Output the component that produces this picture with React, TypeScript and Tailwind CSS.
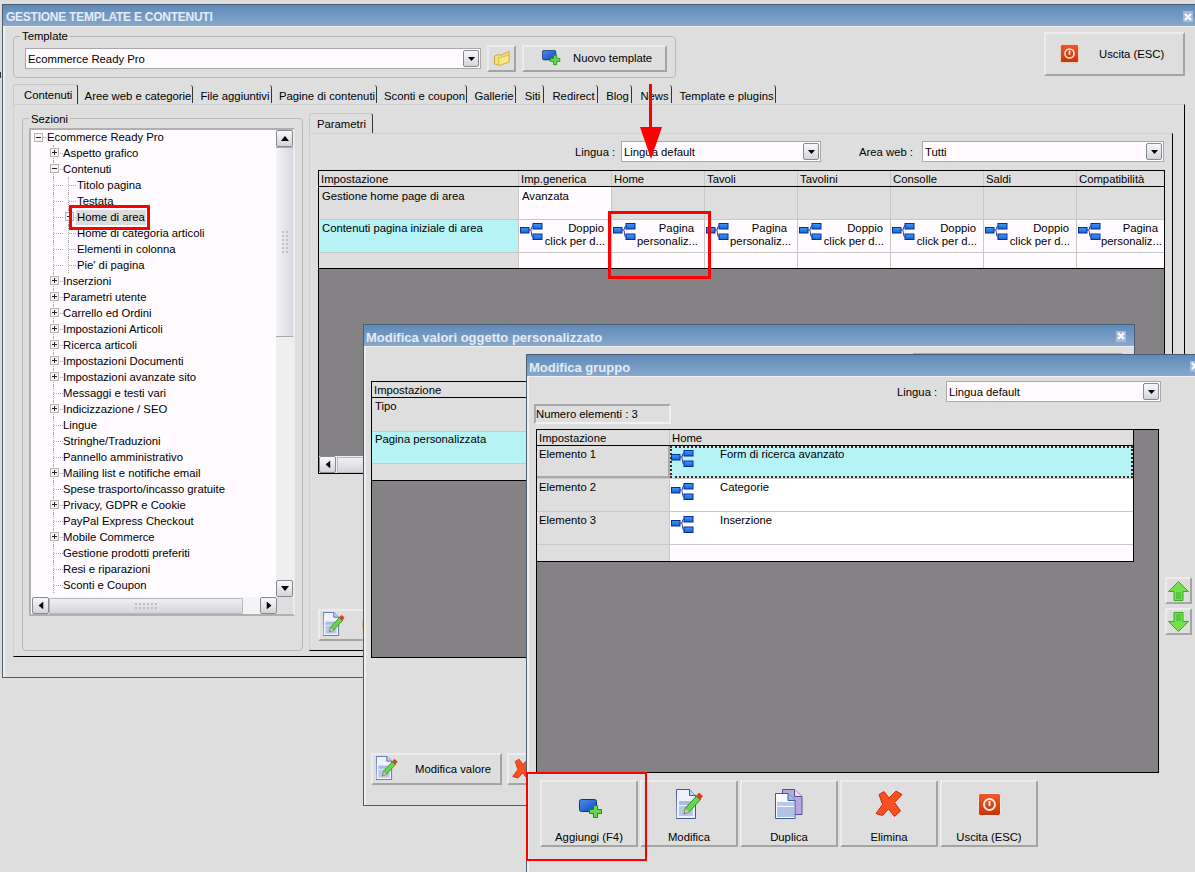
import React from 'react';

const TREE: { label: string; level: number; exp?: '+' | '-' }[] = [
  { label: 'Ecommerce Ready Pro', level: 0, exp: '-' },
  { label: 'Aspetto grafico', level: 1, exp: '+' },
  { label: 'Contenuti', level: 1, exp: '-' },
  { label: 'Titolo pagina', level: 2 },
  { label: 'Testata', level: 2 },
  { label: 'Home di area', level: 2, exp: '+' },
  { label: 'Home di categoria articoli', level: 2 },
  { label: 'Elementi in colonna', level: 2 },
  { label: "Pie' di pagina", level: 2 },
  { label: 'Inserzioni', level: 1, exp: '+' },
  { label: 'Parametri utente', level: 1, exp: '+' },
  { label: 'Carrello ed Ordini', level: 1, exp: '+' },
  { label: 'Impostazioni Articoli', level: 1, exp: '+' },
  { label: 'Ricerca articoli', level: 1, exp: '+' },
  { label: 'Impostazioni Documenti', level: 1, exp: '+' },
  { label: 'Impostazioni avanzate sito', level: 1, exp: '+' },
  { label: 'Messaggi e testi vari', level: 1 },
  { label: 'Indicizzazione / SEO', level: 1, exp: '+' },
  { label: 'Lingue', level: 1 },
  { label: 'Stringhe/Traduzioni', level: 1 },
  { label: 'Pannello amministrativo', level: 1 },
  { label: 'Mailing list e notifiche email', level: 1, exp: '+' },
  { label: 'Spese trasporto/incasso gratuite', level: 1 },
  { label: 'Privacy, GDPR e Cookie', level: 1, exp: '+' },
  { label: 'PayPal Express Checkout', level: 1 },
  { label: 'Mobile Commerce', level: 1, exp: '+' },
  { label: 'Gestione prodotti preferiti', level: 1 },
  { label: 'Resi e riparazioni', level: 1 },
  { label: 'Sconti e Coupon', level: 1 },
];

const TABS = [
  { label: 'Aree web e categorie', w: 115 },
  { label: 'File aggiuntivi', w: 79 },
  { label: 'Pagine di contenuti', w: 105 },
  { label: 'Sconti e coupon', w: 90 },
  { label: 'Gallerie', w: 49 },
  { label: 'Siti', w: 28 },
  { label: 'Redirect', w: 54 },
  { label: 'Blog', w: 34 },
  { label: 'News', w: 40 },
  { label: 'Template e plugins', w: 104 },
];

const COLS = [
  { name: 'Imp.generica', a: 'Doppio', b: 'click per d...' },
  { name: 'Home', a: 'Pagina', b: 'personaliz...' },
  { name: 'Tavoli', a: 'Pagina', b: 'personaliz...' },
  { name: 'Tavolini', a: 'Doppio', b: 'click per d...' },
  { name: 'Consolle', a: 'Doppio', b: 'click per d...' },
  { name: 'Saldi', a: 'Doppio', b: 'click per d...' },
  { name: 'Compatibilità', a: 'Pagina', b: 'personaliz...' },
];

const raised = 'border-2 border-t-[#ececec] border-l-[#ececec] border-r-[#a4a4a4] border-b-[#a4a4a4] bg-[#dedede]';

const TreeIcon = () => (
  <svg width="23" height="18" viewBox="0 0 23 18" className="shrink-0">
    <defs>
      <linearGradient id="treeBlue" x1="0" y1="0" x2="0" y2="1">
        <stop offset="0" stopColor="#3f9cf0" />
        <stop offset="1" stopColor="#1464d4" />
      </linearGradient>
    </defs>
    <path d="M9 7h1.500M10.500 7C12 6.500 11 3 13 3M10.500 7C12 8 11 14 13 14" fill="none" stroke="#1c2f8c" strokeWidth="1" />
    <rect x="0.500" y="4.500" width="8.500" height="5.500" fill="url(#treeBlue)" stroke="#0b2a9c" />
    <rect x="13" y="0.500" width="9" height="5.500" fill="url(#treeBlue)" stroke="#0b2a9c" />
    <rect x="13" y="11" width="9" height="5.500" fill="url(#treeBlue)" stroke="#0b2a9c" />
  </svg>
);

const AddIcon = ({ w = 24 }: { w?: number }) => (
  <svg width={w} height={(w * 19) / 24} viewBox="0 0 24 19">
    <defs>
      <linearGradient id="addBlue" x1="0" y1="0" x2="1" y2="1">
        <stop offset="0" stopColor="#4d8de8" />
        <stop offset="1" stopColor="#0f48c0" />
      </linearGradient>
    </defs>
    <rect x="0.500" y="0.500" width="17" height="12" rx="2" fill="url(#addBlue)" stroke="#12327e" />
    <path d="M14.500 6.500h4v4h4v4h-4v4h-4v-4h-4v-4h4z" fill="#62d84a" stroke="#1f8a1c" />
  </svg>
);

const EditIcon = ({ size = 30 }: { size?: number }) => (
  <svg width={(size * 27) / 30} height={size} viewBox="0 0 27 30">
    <path d="M0.500 0.500h13l6 6v23h-19.500z" fill="#eef2fb" stroke="#3e5a9c" />
    <path d="M13.500 0.500v6h6" fill="#bcd0ee" stroke="#3e5a9c" />
    <rect x="3" y="12" width="14" height="4" fill="#a9bce4" />
    <rect x="3" y="17" width="14" height="10" fill="#b8c8e8" />
    <path d="M8 25l1.500-6 11-12 4 3.500-11 12z" fill="#66d84a" stroke="#2e8c2a" />
    <path d="M8 25l1.500-6 4.500 4z" fill="#d8c8a8" stroke="#6a6a5a" strokeWidth="0.500" />
    <path d="M20.500 7l2.500-3 3.500 3-2.500 3.500z" fill="#e8391c" stroke="#a82010" strokeWidth="0.500" />
  </svg>
);

const DuplicaIcon = () => (
  <svg width="28" height="30" viewBox="0 0 28 30">
    <path d="M7.500 0.500h12l7.500 7v18h-19.500z" fill="#b9a8dc" stroke="#5a4a9c" />
    <path d="M19.500 0.500v7h7.500" fill="#e4dcf4" stroke="#5a4a9c" />
    <path d="M0.500 4.500h12.500l7 7v18h-19.500z" fill="#fafcff" stroke="#3e5a9c" />
    <path d="M13 4.500v7h7" fill="#8cc4e8" stroke="#3e5a9c" />
    <rect x="2" y="13" width="17" height="4" fill="#b8c8e8" />
    <rect x="2" y="18" width="17" height="10" fill="#b0c2e6" />
  </svg>
);

const CrossIcon = ({ size = 28 }: { size?: number }) => (
  <svg width={size} height={size} viewBox="0 0 28 28">
    <path d="M4 4.500l5-3 5 6.500 7-7 6 3.500-7.500 8 6 8.500-6 5.500-6-7.500-6 6.500-6.500-2 6.500-9z" fill="#f8501e" stroke="#c8280c" />
  </svg>
);

const PowerIcon = ({ size = 23 }: { size?: number }) => (
  <svg width={size} height={size} viewBox="0 0 23 23">
    <defs>
      <linearGradient id="powerRed" x1="0" y1="0" x2="0" y2="1">
        <stop offset="0" stopColor="#ee5a2c" />
        <stop offset="1" stopColor="#c83208" />
      </linearGradient>
    </defs>
    <rect x="0.500" y="0.500" width="22" height="22" rx="2" fill="url(#powerRed)" stroke="#f4e4dc" />
    <circle cx="11.500" cy="11.500" r="5.500" fill="none" stroke="#fbe9e0" strokeWidth="2" />
    <path d="M11.500 8v5" stroke="#fbe9e0" strokeWidth="2" />
  </svg>
);

const ArrowIcon = ({ down }: { down?: boolean }) => (
  <svg width="21" height="20" viewBox="0 0 21 20" className={down ? 'rotate-180' : ''}>
    <path d="M10.500 0.500l10 10h-5.500v9h-9v-9h-5.500z" fill="#72e04a" stroke="#3ca82c" />
    <path d="M8 11h5v7h-5z" fill="#58c83c" />
  </svg>
);

const FolderIcon = () => (
  <svg width="16" height="15" viewBox="0 0 16 15">
    <path d="M0.500 5l4-1.500 2 1 8.500-4v10.500l-10 3.500-4.500-1.500z" fill="#f6e27a" stroke="#c8a848" />
    <path d="M4.500 7l10.500-3v7l-10 3.500z" fill="#fbe88c" stroke="#d8b850" />
  </svg>
);

const CloseBtn = () => (
  <div className="flex h-[11px] w-[10px] items-center justify-center bg-[#a6bcd6]">
    <svg width="8" height="8" viewBox="0 0 8 8">
      <path d="M1 1l6 6M7 1l-6 6" stroke="#ffffff" strokeWidth="2" />
    </svg>
  </div>
);

const Combo = ({ text, w }: { text: string; w: number }) => (
  <div style={{ width: w }} className="flex h-[21px] items-center justify-between border border-[#a8a8a8] bg-[#fffbff] pl-[2px] pr-[1px]">
    <span className="pt-[1px]">{text}</span>
    <span className="flex h-[17px] w-[16px] items-center justify-center rounded-[2px] border border-[#8a8a8a] bg-gradient-to-b from-[#f8f8fc] to-[#d4d4dc]">
      <svg width="7" height="4" viewBox="0 0 7 4"><path d="M0 0h7l-3.500 4z" fill="#000" /></svg>
    </span>
  </div>
);

const Expander = ({ kind }: { kind: '+' | '-' }) => (
  <svg width="9" height="9" viewBox="0 0 9 9" className="shrink-0 bg-[#f4f4f4]">
    <rect x="0.500" y="0.500" width="8" height="8" fill="none" stroke="#b4b4b4" />
    <path d={kind === '+' ? 'M2 4.500h5M4.500 2v5' : 'M2 4.500h5'} stroke="#222" />
  </svg>
);

const TreeRow = ({ label, level, exp }: { label: string; level: number; exp?: '+' | '-' }) => {
  const isHome = label === 'Home di area';
  if (level === 0) {
    return (
      <div className="flex h-[16px] items-center pl-[3px]">
        <Expander kind="-" />
        <span className="w-[3px] border-t border-dotted border-[#999]" />
        <span className="ml-[1px] whitespace-nowrap">{label}</span>
      </div>
    );
  }
  return (
    <div className="flex h-[16px] pl-[22px]">
      <div className="relative flex w-[10px] items-center border-l border-dotted border-[#aaa]">
        <span className="w-[9px] border-t border-dotted border-[#aaa]" />
        {level === 1 && exp && (
          <span className="absolute -left-[4px] top-[3px]"><Expander kind={exp} /></span>
        )}
      </div>
      {level === 2 ? (
        <div className="relative ml-[5px] flex items-center border-l border-dotted border-[#aaa] pl-[8px]">
          <span className="absolute left-0 w-[7px] border-t border-dotted border-[#aaa]" />
          {exp && <span className="absolute -left-[4px] top-[3px]"><Expander kind={exp} /></span>}
          <span className={`relative whitespace-nowrap ${isHome ? 'bg-[#dcdcdc] px-[1px] -ml-[1px] py-[1px]' : ''}`}>{label}</span>
        </div>
      ) : (
        <span className="flex items-center whitespace-nowrap">{label}</span>
      )}
    </div>
  );
};

const Win = ({ title, className, titleClass, close, children }: { title: string; className: string; titleClass: string; close: string; children: React.ReactNode }) => (
  <div className={`absolute flex flex-col border-l border-t border-[#4c5c70] bg-[#dedede] ${className}`}>
    <div className="flex h-[21px] shrink-0 items-center justify-between bg-gradient-to-b from-[#5f8ab8] to-[#88a8cc] pl-[3px]">
      <span className={`whitespace-nowrap pt-[3px] text-[#e4ecf6] ${titleClass}`}>{title}</span>
      <span className={close}><CloseBtn /></span>
    </div>
    <div className="flex min-h-0 flex-1 flex-col border-l-2 border-t border-[#f0f0f0]">{children}</div>
  </div>
);

const SmallBtn = ({ icon, label, w }: { icon: React.ReactNode; label: string; w: number }) => (
  <div style={{ width: w }} className={`flex h-[32px] shrink-0 items-center ${raised}`}>
    <span className="ml-[3px] -mt-[3px] flex w-[22px] justify-center">{icon}</span>
    <span className="ml-[17px] whitespace-nowrap pt-[1px]">{label}</span>
  </div>
);

const BigBtn = ({ icon, label, pad }: { icon: React.ReactNode; label: string; pad: string }) => (
  <div className={`flex h-[67px] w-[98px] shrink-0 flex-col items-center ${raised}`}>
    <div className={`flex h-[44px] items-center ${pad}`}>{icon}</div>
    <span className="mt-[5px] whitespace-nowrap">{label}</span>
  </div>
);

export default function App() {
  return (
    <div className="relative h-[872px] w-[1195px] overflow-hidden bg-[#dedede] font-['Liberation_Sans',sans-serif] text-[11.3px] leading-[13px] text-black">
      <div className="absolute left-0 top-[72px] h-[6px] w-[1px] bg-[#333]" />

      {/* finestra principale */}
      <Win title="GESTIONE TEMPLATE E CONTENUTI" className="left-[2px] top-[4px] h-[674px] w-[1193px] border-b border-b-[#4c5c70]" titleClass="text-[12px] font-bold tracking-[-0.25px]" close="mr-[2px] mt-[2px]">
        <div className="flex items-start pl-[8px] pr-[10px] pt-[5px]">
          <div className="relative mt-[4px] flex h-[42px] w-[663px] items-center gap-[6px] rounded-[4px] border border-[#b8b8b8] pl-[11px] pt-[3px]">
            <span className="absolute -top-[7px] left-[6px] bg-[#dedede] px-[2px]">Template</span>
            <Combo text="Ecommerce Ready Pro" w={456} />
            <div className={`-mt-[1px] flex h-[27px] w-[29px] items-center justify-center ${raised}`}><FolderIcon /></div>
            <div className={`-mt-[1px] flex h-[27px] w-[145px] items-center ${raised}`}>
              <span className="ml-[18px]"><AddIcon w={19} /></span>
              <span className="ml-[12px] whitespace-nowrap pt-[1px]">Nuovo template</span>
            </div>
          </div>
          <div className={`ml-auto flex h-[44px] w-[141px] items-center ${raised}`}>
            <span className="ml-[14px] -mt-[2px]"><PowerIcon size={19} /></span>
            <span className="ml-[20px] whitespace-nowrap pt-[1px]">Uscita (ESC)</span>
          </div>
        </div>

        <div className="ml-[8px] mt-[6px] flex h-[20px] w-[1172px] items-center">
          <div className="flex h-[20px] w-[65px] items-center rounded-t-[3px] border-l border-r border-t border-l-[#c8c8c8] border-r-[#333] border-t-[#c8c8c8] pl-[10px] pt-[2px]">Contenuti</div>
          {TABS.map((t) => (
            <div key={t.label} style={{ width: t.w }} className="flex h-[18px] items-center justify-center whitespace-nowrap rounded-tr-[3px] border-r border-[#333] pl-[6px] pt-[5px]">{t.label}</div>
          ))}
        </div>

        <div className="ml-[8px] flex h-[553px] w-[1172px] border-b border-l border-r border-t border-b-black border-l-[#cfcfcf] border-r-black border-t-[#cfcfcf] pl-[8px] pt-[8px]">
          <div className="relative mt-[5px] h-[533px] w-[281px] shrink-0 rounded-[4px] border border-[#b8b8b8] pl-[6px] pt-[9px]">
            <span className="absolute -top-[6px] left-[6px] bg-[#dedede] px-[2px]">Sezioni</span>
            <div className="relative h-[488px] w-[266px] overflow-hidden border-2 border-[#b0b0b0] border-r-[#ececec] border-b-[#b0b0b0] bg-[#fffbff]">
              <div className="-mt-[1px]">
                {TREE.map((r) => <TreeRow key={r.label} {...r} />)}
              </div>
              <div className="absolute bottom-0 right-0 top-0 flex w-[17px] flex-col bg-[#efefef]">
                <ScrollBtn dir="up" />
                <div className="flex h-[190px] items-center justify-center border-b border-t border-[#a8a8b0] bg-gradient-to-r from-[#f4f4f8] to-[#d8d8e0]">
                  <span className="h-[22px] w-[6px] border-l-2 border-r-2 border-dotted border-[#c0c0c0]" />
                </div>
                <div className="flex-1" />
                <ScrollBtn dir="down" />
                <div className="h-[17px] bg-[#dedede]" />
              </div>
              <div className="absolute bottom-0 left-[1px] flex h-[17px] w-[245px] items-center bg-[#f4f4f4]">
                <ScrollBtn dir="left" />
                <div className="flex h-[16px] w-[194px] items-center justify-center rounded-[1px] border border-[#b8b8c0] bg-gradient-to-b from-[#f0f0f4] to-[#d4d4dc]">
                  <span className="h-[6px] w-[22px] border-b-2 border-t-2 border-dotted border-[#c0c0c0]" />
                </div>
                <div className="flex-1" />
                <ScrollBtn dir="right" />
              </div>
            </div>
          </div>

          <div className="ml-[6px] flex h-[538px] w-[864px] shrink-0 flex-col">
            <div className="flex h-[20px] w-[64px] items-center rounded-t-[3px] border-l border-r border-t border-l-[#c8c8c8] border-r-[#333] border-t-[#c8c8c8] pl-[7px] pt-[1px]">Parametri</div>
            <div className="flex flex-1 flex-col border-b border-l border-r border-t border-b-black border-l-[#cfcfcf] border-r-black border-t-[#cfcfcf]">
              <div className="mt-[7px] flex items-center">
                <span className="ml-[265px] w-[46px] pt-[1px]">Lingua :</span>
                <Combo text="Lingua default" w={200} />
                <span className="ml-[38px] w-[63px] pt-[1px]">Area web :</span>
                <Combo text="Tutti" w={242} />
              </div>
              <div className="ml-[8px] mt-[8px] flex h-[304px] w-[847px] flex-col border border-black bg-[#848284]">
                <div className="grid h-[16px] grid-cols-[200px_repeat(6,93px)_87px] border-b border-black bg-[#dedede]">
                  <div className="border-r border-[#c8c8c8] pl-[2px] pt-[2px]">Impostazione</div>
                  {COLS.map((c) => <div key={c.name} className="border-r border-[#c8c8c8] pl-[2px] pt-[2px] last:border-r-0">{c.name}</div>)}
                </div>
                <div className="grid h-[33px] grid-cols-[200px_repeat(6,93px)_87px] border-b border-[#c8c8c8] bg-[#dedede]">
                  <div className="border-r border-[#c8c8c8] pl-[3px] pt-[3px]">Gestione home page di area</div>
                  <div className="border-r border-[#c8c8c8] bg-[#fffbff] pl-[3px] pt-[3px]">Avanzata</div>
                  {COLS.slice(1).map((c) => <div key={c.name} className="border-r border-[#c8c8c8] last:border-r-0" />)}
                </div>
                <div className="grid h-[33px] grid-cols-[200px_repeat(6,93px)_87px] border-b border-[#c8c8c8] bg-[#fffbff]">
                  <div className="border-r border-[#c8c8c8] bg-[#b5f3f7] pl-[3px] pt-[2px]">Contenuti pagina iniziale di area</div>
                  {COLS.map((c) => (
                    <div key={c.name} className="flex border-r border-[#c8c8c8] pl-[1px] pt-[3px] last:border-r-0">
                      <TreeIcon />
                      <div className="-mt-[1px] flex-1 whitespace-nowrap text-right">
                        <div className={c.a === 'Doppio' ? 'pr-[7px]' : 'pr-[10px]'}>{c.a}</div>
                        <div className="pr-[6px]">{c.b}</div>
                      </div>
                    </div>
                  ))}
                </div>
                <div className="grid h-[16px] grid-cols-[200px_repeat(6,93px)_87px] border-b border-black bg-[#fffbff]">
                  <div className="border-r border-[#c8c8c8] bg-[#dedede]" />
                  {COLS.map((c) => <div key={c.name} className="border-r border-[#c8c8c8] last:border-r-0" />)}
                </div>
                <div className="flex-1" />
                <div className="flex h-[17px] items-center bg-[#f0f0f0]">
                  <ScrollBtn dir="left" />
                  <div className="ml-[1px] h-[16px] w-[300px] border border-[#b8b8c0] bg-gradient-to-b from-[#f0f0f4] to-[#d4d4dc]" />
                </div>
              </div>
              <div className="ml-[8px] mt-[135px]">
                <SmallBtn icon={<EditIcon size={24} />} label="Modifica" w={130} />
              </div>
            </div>
          </div>
        </div>
      </Win>

      {/* Modifica valori oggetto personalizzato */}
      <Win title="Modifica valori oggetto personalizzato" className="left-[363px] top-[324px] h-[482px] w-[772px] border-b border-r border-[#4c5c70]" titleClass="-ml-[1px] text-[13px] font-bold" close="mr-[8px] mt-[1px]">
        <div className="mr-[12px] mt-[6px] self-end"><Combo text="" w={209} /></div>
        <div className="ml-[5px] mt-[7px] flex h-[277px] w-[752px] flex-col border border-black bg-[#848284]">
          <div className="flex h-[16px] border-b border-black bg-[#dedede] pl-[2px] pt-[2px]">Impostazione</div>
          <div className="h-[34px] border-b border-[#c8c8c8] bg-[#dedede] pl-[3px] pt-[2px]">Tipo</div>
          <div className="h-[32px] border-b border-[#c8c8c8] bg-[#b5f3f7] pl-[3px] pt-[1px]">Pagina personalizzata</div>
          <div className="h-[17px] border-b border-black bg-[#dedede]" />
        </div>
        <div className="ml-[5px] mt-[95px] flex gap-[5px]">
          <SmallBtn icon={<EditIcon size={24} />} label="Modifica valore" w={131} />
          <div className={`flex h-[32px] w-[120px] items-center pl-[3px] ${raised}`}><CrossIcon size={22} /></div>
        </div>
      </Win>

      {/* Modifica gruppo */}
      <Win title="Modifica gruppo" className="left-[526px] top-[354px] h-[530px] w-[680px]" titleClass="-ml-[1px] text-[13px] font-bold" close="mr-[6px] mt-[1px]">
        <div className="mt-[4px] flex items-center pl-[368px]">
          <span className="w-[49px] pt-[1px]">Lingua :</span>
          <Combo text="Lingua default" w={215} />
        </div>
        <div className="ml-[5px] mt-[2px] flex h-[20px] w-[137px] items-center border-2 border-b-[#f0f0f0] border-l-[#a8a8a8] border-r-[#f0f0f0] border-t-[#a8a8a8]">Numero elementi : 3</div>
        <div className="flex">
          <div className="ml-[7px] mt-[5px] flex h-[344px] w-[623px] flex-col border border-black bg-[#848284]">
            <div className="w-[597px] border-b border-r border-black">
              <div className="grid h-[16px] grid-cols-[133px_1fr] border-b border-black bg-[#dedede]">
                <div className="border-r border-[#c8c8c8] pl-[2px] pt-[2px]">Impostazione</div>
                <div className="pl-[2px] pt-[2px]">Home</div>
              </div>
              {['Elemento 1', 'Elemento 2', 'Elemento 3'].map((l, i) => (
                <div key={l} className={`grid grid-cols-[133px_1fr] ${i === 0 ? 'h-[32px]' : 'h-[33px] border-t border-[#c8c8c8]'}`}>
                  <div className={`bg-[#dedede] pl-[2px] pt-[2px] ${i === 0 ? 'border-b-2 border-r-2 border-b-[#a8a8a8] border-r-[#a8a8a8]' : 'border-r border-[#c8c8c8]'}`}>{l}</div>
                  <div className={`flex pl-[1px] pt-[4px] ${i === 0 ? 'bg-[#b5f3f7] outline-2 -outline-offset-2 outline-dotted outline-[#4a2424]' : 'bg-white'}`}>
                    <TreeIcon />
                    <span className="ml-[26px] -mt-[2px]">{['Form di ricerca avanzato', 'Categorie', 'Inserzione'][i]}</span>
                  </div>
                </div>
              ))}
              <div className="grid h-[17px] grid-cols-[133px_1fr] border-t border-[#c8c8c8]">
                <div className="border-r border-[#c8c8c8] bg-[#dedede]" />
                <div className="bg-[#fffbff]" />
              </div>
            </div>
          </div>
          <div className="ml-[6px] mt-[153px] flex flex-col gap-[4px]">
            <div className={`flex h-[27px] w-[27px] items-center justify-center ${raised}`}><ArrowIcon /></div>
            <div className={`flex h-[27px] w-[27px] items-center justify-center ${raised}`}><ArrowIcon down /></div>
          </div>
        </div>
        <div className="ml-[11px] mt-[7px] flex gap-[2px]">
          <BigBtn icon={<span className="ml-[3px]"><AddIcon /></span>} label="Aggiungi (F4)" pad="pt-[8px]" />
          <BigBtn icon={<EditIcon />} label="Modifica" pad="" />
          <BigBtn icon={<DuplicaIcon />} label="Duplica" pad="" />
          <BigBtn icon={<CrossIcon />} label="Elimina" pad="" />
          <BigBtn icon={<PowerIcon />} label="Uscita (ESC)" pad="" />
        </div>
      </Win>

      {/* annotazioni rosse */}
      <div className="absolute left-[69px] top-[205px] h-[25px] w-[81px] border-[3px] border-[#ff0000]" />
      <div className="absolute left-[608px] top-[211px] h-[68px] w-[103px] border-[3px] border-[#ff0000]" />
      <div className="absolute left-[526px] top-[772px] h-[89px] w-[121px] border-2 border-[#ff0000]" />
      <svg width="24" height="76" viewBox="0 0 24 76" className="absolute left-[640px] top-[84px]">
        <path d="M9 0h3v43h10l-11 32-11-32h9z" fill="#ff0000" />
      </svg>
    </div>
  );
}

function ScrollBtn({ dir }: { dir: 'up' | 'down' | 'left' | 'right' }) {
  const rot = dir === 'up' ? 'rotate-180' : dir === 'left' ? 'rotate-90' : dir === 'right' ? '-rotate-90' : '';
  return (
    <div className="flex h-[17px] w-[17px] shrink-0 items-center justify-center rounded-[2px] border border-[#8a8a8a] bg-gradient-to-b from-[#f8f8fc] to-[#d4d4dc]">
      <svg width="8" height="5" viewBox="0 0 8 5" className={rot}><path d="M0 0h8l-4 5z" fill="#000" /></svg>
    </div>
  );
}
